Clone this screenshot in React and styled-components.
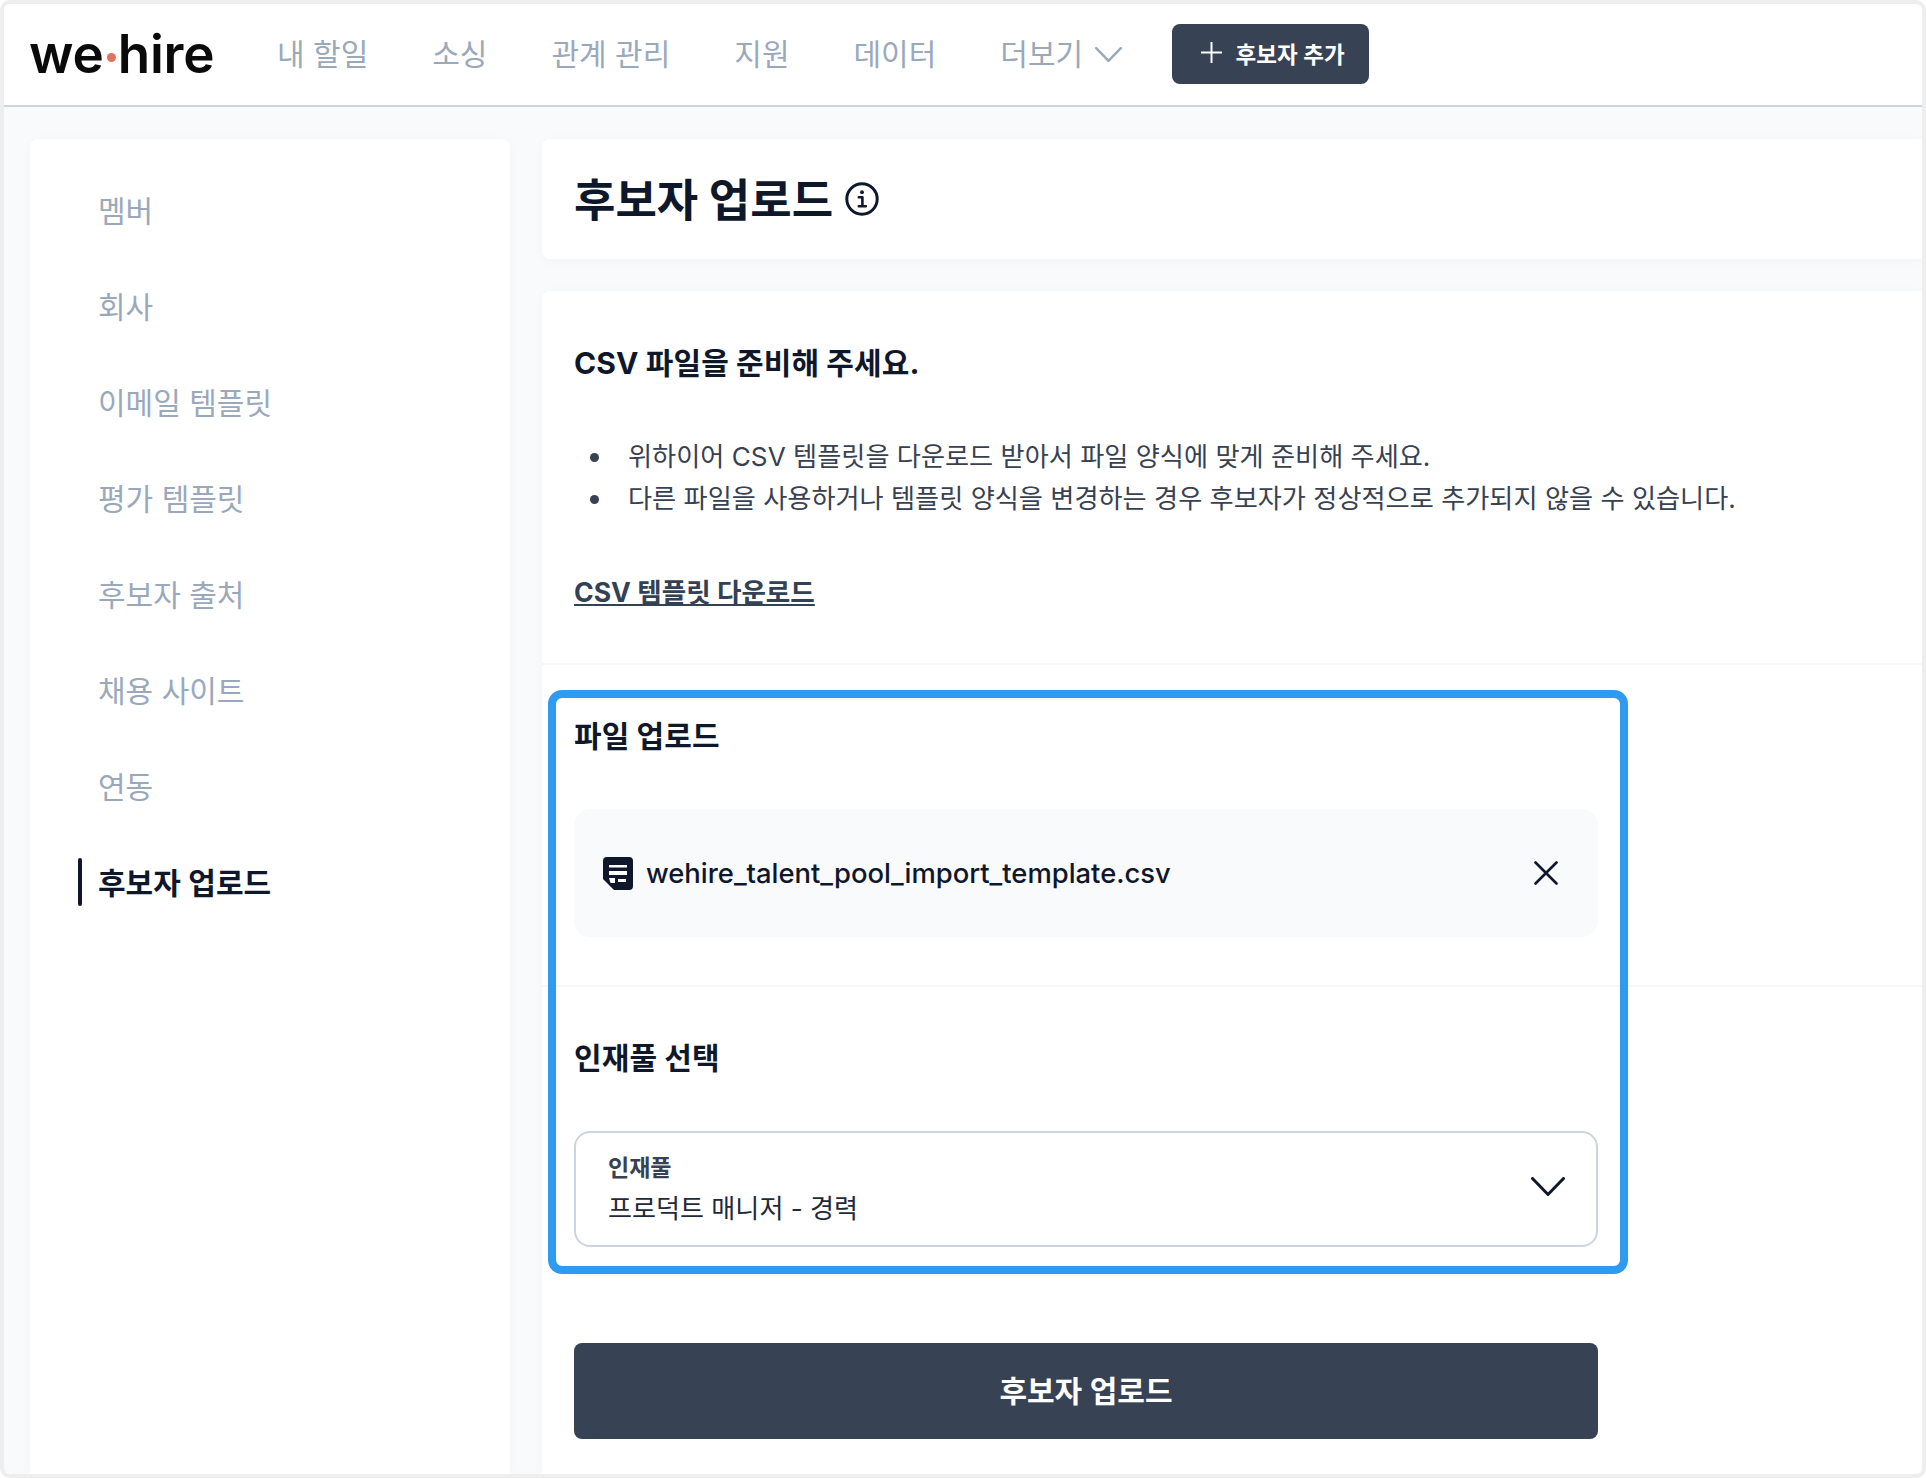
import React from 'react'
import styled, { createGlobalStyle } from 'styled-components'

const GlobalStyle = createGlobalStyle`
  html, body {
    margin: 0;
    padding: 0;
    background: #fff;
  }
  * {
    box-sizing: border-box;
  }
  body {
    font-family: Inter, "Noto Sans CJK KR", sans-serif;
  }
`

const Frame = styled.div`
  width: 1926px;
  height: 1478px;
  border: 4px solid #eeeeee;
  border-radius: 10px;
  overflow: hidden;
  background: #f8fafc;
  display: flex;
  flex-direction: column;
`

const Header = styled.header`
  height: 103px;
  flex: none;
  padding: 0 0 1px 25px;
  background: #fff;
  border-bottom: 2px solid #cbd5e1;
  display: flex;
  align-items: center;
`

const Logo = styled.div`
  width: 184px;
  flex: none;
  margin-right: 64px;
  display: flex;
  align-items: center;
  font-size: 53px;
  line-height: 60px;
  font-weight: 600;
  letter-spacing: -0.2px;
  color: #0a0a0a;
`

const LogoDot = styled.span`
  width: 9px;
  height: 9px;
  flex: none;
  margin: 6px 2px 0 3px;
  border-radius: 50%;
  background: #e2735a;
`

const Nav = styled.nav`
  display: flex;
  align-items: center;
  gap: 64px;
`

const NavItem = styled.a`
  display: flex;
  align-items: center;
  gap: 12px;
  font-size: 30px;
  line-height: 40px;
  color: #9aa8bc;
  white-space: nowrap;
`

const AddButton = styled.button`
  width: 197px;
  height: 60px;
  margin-left: 50px;
  padding: 0 0 3px 4px;
  border: none;
  border-radius: 8px;
  background: #374254;
  color: #fff;
  display: flex;
  align-items: center;
  justify-content: center;
  gap: 14px;
  font-family: inherit;
  font-size: 22.5px;
  font-weight: 600;
`

const Body = styled.div`
  flex: 1;
  min-height: 0;
  display: flex;
  gap: 32px;
  padding: 32px 0 0 26px;
`

const Sidebar = styled.aside`
  width: 480px;
  flex: none;
  padding-top: 22px;
  background: #fff;
  border-radius: 8px 8px 0 0;
  box-shadow: 0 2px 12px rgba(15, 23, 42, 0.03);
`

const SideItem = styled.a`
  height: 96px;
  margin-left: 48px;
  display: flex;
  align-items: center;
  font-size: 30px;
  color: ${(p) => (p.$active ? '#0f172a' : '#9aa8bc')};
  font-weight: ${(p) => (p.$active ? 600 : 400)};

  &::before {
    content: '';
    width: 4px;
    height: 48px;
    margin: 2px 16px 0 0;
    border-radius: 2px;
    background: ${(p) => (p.$active ? '#0f172a' : 'transparent')};
  }
`

const Main = styled.main`
  flex: 1;
  min-width: 0;
  display: flex;
  flex-direction: column;
  gap: 32px;
`

const TitleCard = styled.div`
  height: 120px;
  flex: none;
  padding-left: 32px;
  background: #fff;
  border-radius: 8px 0 0 8px;
  box-shadow: 0 2px 12px rgba(15, 23, 42, 0.03);
  display: flex;
  align-items: center;
  gap: 12px;
`

const PageTitle = styled.h1`
  margin: 3px 0 0;
  font-size: 45px;
  line-height: 60px;
  font-weight: 700;
  color: #0f172a;
`

const ContentCard = styled.div`
  flex: 1;
  position: relative;
  background: #fff;
  border-radius: 8px 0 0 0;
  box-shadow: 0 2px 12px rgba(15, 23, 42, 0.03);
`

const Section = styled.section`
  padding: ${(p) => p.$pad};
  border-bottom: ${(p) => (p.$last ? 'none' : '2px solid #f6f7f9')};
`

const SectionTitle = styled.h2`
  margin: 0;
  font-size: 30px;
  line-height: 40px;
  font-weight: 700;
  letter-spacing: 0.1px;
  color: #0f172a;
`

const Notes = styled.ul`
  margin: 53px 0 0;
  padding: 0 0 0 16px;
  list-style: none;
  font-size: 26.2px;
  line-height: 42px;
  color: #374151;
`

const Note = styled.li`
  display: flex;
  align-items: center;
  gap: 29px;

  &::before {
    content: '';
    width: 9px;
    height: 9px;
    flex: none;
    border-radius: 50%;
    background: #374151;
  }
`

const TemplateLink = styled.a`
  display: block;
  margin-top: 54px;
  font-size: 26.6px;
  line-height: 36px;
  font-weight: 700;
  color: #334155;
  text-decoration: underline;
`

const FileBox = styled.div`
  height: 128px;
  width: 1024px;
  margin-top: 53px;
  padding: 0 40px 0 29px;
  border-radius: 16px;
  background: #f8fafc;
  display: flex;
  align-items: center;
  color: #0f172a;
`

const FileName = styled.span`
  flex: 1;
  margin-left: 13px;
  font-size: 27.4px;
  font-weight: 500;
`

const SelectBox = styled.div`
  width: 1024px;
  height: 116px;
  margin-top: 53px;
  padding: 0 31px 0 32px;
  border: 2px solid #cbd5e1;
  border-radius: 16px;
  display: flex;
  align-items: center;
  justify-content: space-between;
`

const SelectText = styled.div`
  display: flex;
  flex-direction: column;
`

const SelectLabel = styled.span`
  font-size: 23px;
  line-height: 32px;
  font-weight: 600;
  color: #374151;
`

const SelectValue = styled.span`
  margin-top: 7px;
  font-size: 26.1px;
  line-height: 36px;
  color: #1e293b;
`

const SelectArrow = styled.span`
  display: flex;
  margin-bottom: 6px;
`

const SubmitButton = styled.button`
  display: block;
  width: 1024px;
  height: 96px;
  margin-top: 96px;
  padding: 0 0 4px;
  border: none;
  border-radius: 8px;
  background: #374254;
  color: #fff;
  font-family: inherit;
  font-size: 30px;
  font-weight: 600;
`

const Highlight = styled.div`
  position: absolute;
  left: 6px;
  top: 399px;
  width: 1080px;
  height: 584px;
  border: 8px solid #2f9bf0;
  border-radius: 14px;
  pointer-events: none;
`

const Chevron = ({ w, h, color, sw }) => (
  <svg width={w} height={h} viewBox={`0 0 ${w} ${h}`} fill="none">
    <path
      d={`M${sw / 2} ${sw / 2}L${w / 2} ${h - sw / 2}L${w - sw / 2} ${sw / 2}`}
      stroke={color}
      strokeWidth={sw}
      strokeLinecap="round"
      strokeLinejoin="round"
    />
  </svg>
)

const PlusIcon = () => (
  <svg width="21" height="21" viewBox="0 0 21 21" fill="none">
    <path d="M10.5 0.5V20.5M0.5 10.5H20.5" stroke="#fff" strokeWidth="2" strokeLinecap="round" />
  </svg>
)

const InfoIcon = () => (
  <svg width="34" height="34" viewBox="0 0 34 34" fill="none">
    <circle cx="17" cy="17" r="15.2" stroke="#0f172a" strokeWidth="3" />
    <circle cx="17" cy="10.2" r="1.9" fill="#0f172a" />
    <path
      d="M13.8 15.2H17.4V23.6M13.8 24.2H20.8"
      stroke="#0f172a"
      strokeWidth="2.6"
      strokeLinecap="round"
      strokeLinejoin="round"
    />
  </svg>
)

const FileIcon = () => (
  <svg width="30" height="33" viewBox="0 0 30 33">
    <path
      d="M4 0H26A4 4 0 0 1 30 4V29A4 4 0 0 1 26 33H11L0 22V4A4 4 0 0 1 4 0Z"
      fill="#0f172a"
    />
    <path d="M6 8H24V10.5H6ZM6 14H24V18H6Z" fill="#fff" />
    <path d="M15 22H23V25H15Z" fill="#fff" />
    <path d="M6 21H12V26H7.5Z" fill="#fff" />
  </svg>
)

const CloseIcon = () => (
  <svg width="24" height="24" viewBox="0 0 24 24" fill="none">
    <path d="M1.5 1.5L22.5 22.5M22.5 1.5L1.5 22.5" stroke="#0f172a" strokeWidth="2.6" strokeLinecap="round" />
  </svg>
)

const menuItems = ['멤버', '회사', '이메일 템플릿', '평가 템플릿', '후보자 출처', '채용 사이트', '연동']

export default function App() {
  return (
    <Frame>
      <GlobalStyle />
      <Header>
        <Logo>
          we<LogoDot />hire
        </Logo>
        <Nav>
          <NavItem>내 할일</NavItem>
          <NavItem>소싱</NavItem>
          <NavItem>관계 관리</NavItem>
          <NavItem>지원</NavItem>
          <NavItem>데이터</NavItem>
          <NavItem>
            더보기 <Chevron w={27} h={15} color="#9aa8bc" sw={2.4} />
          </NavItem>
        </Nav>
        <AddButton>
          <PlusIcon />
          후보자 추가
        </AddButton>
      </Header>
      <Body>
        <Sidebar>
          {menuItems.map((item) => (
            <SideItem key={item}>{item}</SideItem>
          ))}
          <SideItem $active>후보자 업로드</SideItem>
        </Sidebar>
        <Main>
          <TitleCard>
            <PageTitle>후보자 업로드</PageTitle>
            <InfoIcon />
          </TitleCard>
          <ContentCard>
            <Section $pad="52px 32px 53px">
              <SectionTitle>CSV 파일을 준비해 주세요.</SectionTitle>
              <Notes>
                <Note>위하이어 CSV 템플릿을 다운로드 받아서 파일 양식에 맞게 준비해 주세요.</Note>
                <Note>다른 파일을 사용하거나 템플릿 양식을 변경하는 경우 후보자가 정상적으로 추가되지 않을 수 있습니다.</Note>
              </Notes>
              <TemplateLink>CSV 템플릿 다운로드</TemplateLink>
            </Section>
            <Section $pad="51px 32px 48px">
              <SectionTitle>파일 업로드</SectionTitle>
              <FileBox>
                <FileIcon />
                <FileName>wehire_talent_pool_import_template.csv</FileName>
                <CloseIcon />
              </FileBox>
            </Section>
            <Section $last $pad="51px 32px 0">
              <SectionTitle>인재풀 선택</SectionTitle>
              <SelectBox>
                <SelectText>
                  <SelectLabel>인재풀</SelectLabel>
                  <SelectValue>프로덕트 매니저 - 경력</SelectValue>
                </SelectText>
                <SelectArrow>
                  <Chevron w={34} h={19} color="#0f172a" sw={3} />
                </SelectArrow>
              </SelectBox>
              <SubmitButton>후보자 업로드</SubmitButton>
            </Section>
            <Highlight />
          </ContentCard>
        </Main>
      </Body>
    </Frame>
  )
}
